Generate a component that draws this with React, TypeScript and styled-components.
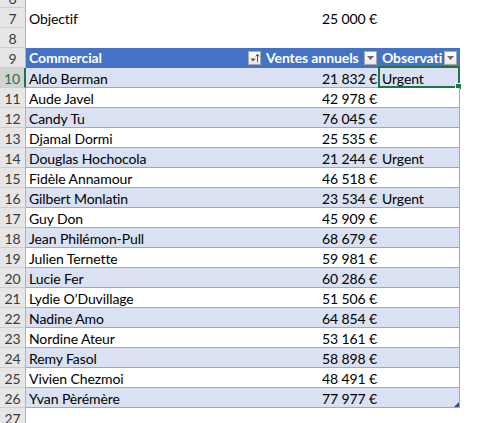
import React from 'react';
import styled, { createGlobalStyle, css } from 'styled-components';

const GlobalStyle = createGlobalStyle`
  html, body { margin: 0; padding: 0; background: #ffffff; overflow: hidden; }
  body { font-family: Lato, "Liberation Sans", sans-serif; }
`;

type Band = 'plain' | 'head' | 'odd' | 'even';

const Sheet = styled.div`
  display: flex;
  flex-direction: column;
  margin-top: -12px;
  width: 492px;
`;

const Row = styled.div`
  display: grid;
  grid-template-columns: 26px 237px 116px 81px 1fr;
  height: 20px;
`;

const RowNum = styled.div<{ $active?: boolean }>`
  box-sizing: border-box;
  height: 20px;
  background: ${p => (p.$active ? '#d2d2d2' : '#e6e6e6')};
  color: ${p => (p.$active ? '#217346' : '#3a3a3a')};
  border-bottom: 1px solid #cdcdcd;
  border-right: ${p => (p.$active ? '2px solid #217346' : '1px solid #b4b4b4')};
  font-size: 14px;
  line-height: 22px;
  text-align: center;
  overflow: hidden;
`;

const bandStyles = {
  plain: css`
    background: transparent;
    color: #000;
  `,
  head: css`
    background: #4472c4;
    color: #ffffff;
    font-weight: 700;
  `,
  odd: css`
    background: #d9e1f2;
    color: #000;
    border-bottom: 1px solid #8ea9db;
  `,
  even: css`
    background: #ffffff;
    color: #000;
    border-bottom: 1px solid #8ea9db;
  `,
};

const Cell = styled.div<{ $band: Band; $align?: 'left' | 'right'; $edge?: boolean; $open?: boolean }>`
  box-sizing: border-box;
  position: relative;
  height: 20px;
  padding: 0 2px 0 3px;
  font-size: 14px;
  line-height: 22px;
  letter-spacing: -0.1px;
  white-space: nowrap;
  overflow: ${p => (p.$open ? 'visible' : 'hidden')};
  text-align: ${p => p.$align ?? 'left'};
  ${p => bandStyles[p.$band]}
  ${p =>
    p.$edge &&
    css`
      border-right: 1px solid ${p.$band === 'head' ? '#4472c4' : '#8ea9db'};
    `}
`;

const HeadCell = styled(Cell)`
  display: flex;
  align-items: center;
  padding-right: 2px;
`;

const HeadLabel = styled.span`
  flex: 1;
  min-width: 0;
  overflow: hidden;
  white-space: nowrap;
`;

const FilterButton = styled.span`
  box-sizing: border-box;
  flex: none;
  width: 13px;
  height: 14px;
  margin-left: 2px;
  display: flex;
  align-items: center;
  justify-content: center;
  background: linear-gradient(#ffffff, #e8e8e8);
  border: 1px solid #a9a9a9;
`;

const Selection = styled.span`
  position: absolute;
  top: -2px;
  left: -1px;
  right: -1px;
  bottom: -1px;
  border: 2px solid #217346;
  pointer-events: none;
`;

const FillHandle = styled.span`
  position: absolute;
  right: -4px;
  bottom: -4px;
  width: 5px;
  height: 5px;
  background: #217346;
  border: 1px solid #ffffff;
`;

const ResizeHandle = styled.svg`
  position: absolute;
  right: 0;
  bottom: 0;
`;

const DropIcon = () => (
  <svg width="7" height="4" viewBox="0 0 7 4">
    <path d="M0 0 H7 L3.5 4 Z" fill="#6a6a6a" />
  </svg>
);

const SortIcon = () => (
  <svg width="10" height="10" viewBox="0 0 10 10">
    <path d="M0.5 5.5 H5.5 L3 8.5 Z" fill="#555" />
    <path d="M7.5 9 V1.5" stroke="#555" strokeWidth="1" />
    <path d="M5.8 3.4 L7.5 1.2 L9.2 3.4" stroke="#555" strokeWidth="1" fill="none" />
  </svg>
);

const data: [string, string, string][] = [
  ['Aldo Berman', '21 832 €', 'Urgent'],
  ['Aude Javel', '42 978 €', ''],
  ['Candy Tu', '76 045 €', ''],
  ['Djamal Dormi', '25 535 €', ''],
  ['Douglas Hochocola', '21 244 €', 'Urgent'],
  ['Fidèle Annamour', '46 518 €', ''],
  ['Gilbert Monlatin', '23 534 €', 'Urgent'],
  ['Guy Don', '45 909 €', ''],
  ['Jean Philémon-Pull', '68 679 €', ''],
  ['Julien Ternette', '59 981 €', ''],
  ['Lucie Fer', '60 286 €', ''],
  ['Lydie O’Duvillage', '51 506 €', ''],
  ['Nadine Amo', '64 854 €', ''],
  ['Nordine Ateur', '53 161 €', ''],
  ['Remy Fasol', '58 898 €', ''],
  ['Vivien Chezmoi', '48 491 €', ''],
  ['Yvan Pèrémère', '77 977 €', ''],
];

const PlainRow = ({ n, a = '', b = '' }: { n: number; a?: string; b?: string }) => (
  <Row>
    <RowNum>{n}</RowNum>
    <Cell $band="plain">{a}</Cell>
    <Cell $band="plain" $align="right">{b}</Cell>
    <Cell $band="plain" />
    <Cell $band="plain" />
  </Row>
);

export default function App() {
  return (
    <>
      <GlobalStyle />
      <Sheet>
        <PlainRow n={6} />
        <PlainRow n={7} a="Objectif" b="25 000 €" />
        <PlainRow n={8} />
        <Row>
          <RowNum>9</RowNum>
          <HeadCell $band="head">
            <HeadLabel>Commercial</HeadLabel>
            <FilterButton>
              <SortIcon />
            </FilterButton>
          </HeadCell>
          <HeadCell $band="head">
            <HeadLabel>Ventes annuels</HeadLabel>
            <FilterButton>
              <DropIcon />
            </FilterButton>
          </HeadCell>
          <HeadCell $band="head" $edge>
            <HeadLabel>Observation</HeadLabel>
            <FilterButton>
              <DropIcon />
            </FilterButton>
          </HeadCell>
          <Cell $band="plain" />
        </Row>
        {data.map(([name, amount, note], i) => {
          const band: Band = i % 2 === 0 ? 'odd' : 'even';
          const selected = i === 0;
          const last = i === data.length - 1;
          return (
            <Row key={name}>
              <RowNum $active={selected}>{i + 10}</RowNum>
              <Cell $band={band}>{name}</Cell>
              <Cell $band={band} $align="right">{amount}</Cell>
              <Cell $band={band} $edge $open={selected || last}>
                {note}
                {selected && (
                  <Selection>
                    <FillHandle />
                  </Selection>
                )}
                {last && (
                  <ResizeHandle width="5" height="5" viewBox="0 0 5 5">
                    <path d="M5 0 V5 H0 Z" fill="#2f4f8f" />
                  </ResizeHandle>
                )}
              </Cell>
              <Cell $band="plain" />
            </Row>
          );
        })}
        <PlainRow n={27} />
      </Sheet>
    </>
  );
}
